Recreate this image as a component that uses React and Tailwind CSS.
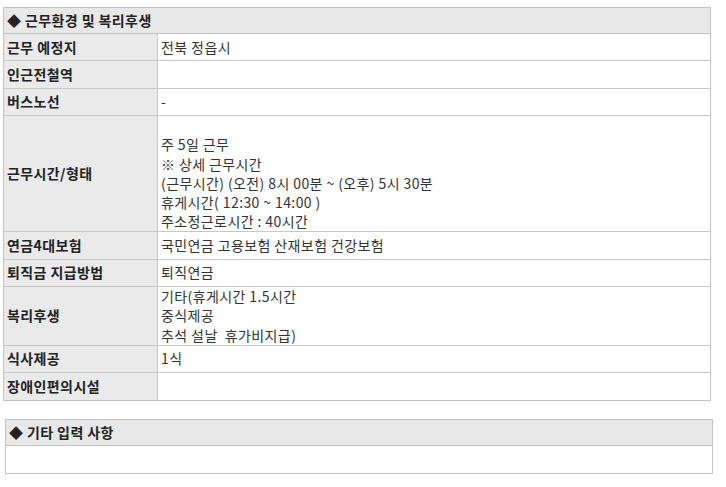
const rows = [
  { label: '근무 예정지', value: ['전북 정읍시'] },
  { label: '인근전철역', value: [''] },
  { label: '버스노선', value: ['-'] },
  {
    label: '근무시간/형태',
    value: [
      '',
      '주 5일 근무',
      '※ 상세 근무시간',
      '(근무시간) (오전) 8시 00분 ~ (오후) 5시 30분',
      '휴게시간( 12:30 ~ 14:00 )',
      '주소정근로시간 : 40시간',
    ],
  },
  { label: '연금4대보험', value: ['국민연금 고용보험 산재보험 건강보험'] },
  { label: '퇴직금 지급방법', value: ['퇴직연금'] },
  {
    label: '복리후생',
    value: ['기타(휴게시간 1.5시간', '중식제공', '추석 설날  휴가비지급)'],
  },
  { label: '식사제공', value: ['1식'] },
  { label: '장애인편의시설', value: [''] },
];

const font = { fontFamily: '"Noto Sans CJK KR", "Noto Sans", sans-serif' };

const SectionHeader = ({ title }) => (
  <div className="h-[26px] flex items-center px-[3px] bg-[#e8e8e8] border-b border-[#c3c3c3] text-[14px] tracking-[0.4px] font-bold text-[#222]">
    ◆ {title}
  </div>
);

export default function App() {
  return (
    <div className="bg-white w-[726px] h-[487px] pt-[7px]" style={font}>
      {/* 근무환경 및 복리후생 */}
      <div className="ml-[3px] w-[708px] border border-[#c3c3c3]">
        <SectionHeader title="근무환경 및 복리후생" />
        {rows.map((row, i) => (
          <div
            key={row.label}
            className={`flex ${i < rows.length - 1 ? 'border-b border-[#c8c8c8]' : ''}`}
          >
            <div className="w-[154px] shrink-0 flex items-center px-[3px] bg-[#eaeaea] border-r border-[#c8c8c8] text-[14px] tracking-[0.4px] font-bold text-[#222]">
              {row.label}
            </div>
            <div className="flex-1 min-h-[26.4px] flex flex-col justify-center px-[3px] text-[14px] tracking-[0.4px] text-[#333] leading-[19.2px] whitespace-pre">
              {row.value.map((line, j) => (
                <div key={j} className="min-h-[19.2px]">
                  {line}
                </div>
              ))}
            </div>
          </div>
        ))}
      </div>

      {/* 기타 입력 사항 */}
      <div className="ml-[5px] mt-[18px] w-[708px] border border-[#c3c3c3]">
        <SectionHeader title="기타 입력 사항" />
        <div className="h-[27px]" />
      </div>
    </div>
  );
}
